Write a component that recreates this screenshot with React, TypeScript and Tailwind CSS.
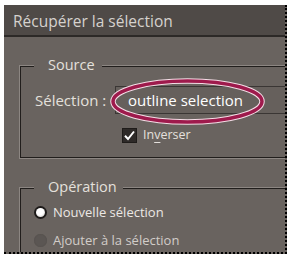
import React from "react";

const font = { fontFamily: '"Open Sans", "Noto Sans", sans-serif' };

function Radio({ on }: { on: boolean }) {
  return on ? (
    <span className="w-[13px] h-[13px] rounded-full bg-[#1d1a19] flex items-center justify-center shrink-0">
      <span className="w-[9px] h-[9px] rounded-full bg-[radial-gradient(circle_at_45%_40%,#ffffff_45%,#bdb8b4_100%)]" />
    </span>
  ) : (
    <span className="w-[13px] h-[13px] rounded-full bg-[#5b5653] shadow-[inset_0_0_1px_#4a4542] shrink-0" />
  );
}

export default function App() {
  return (
    <div className="w-[292px] h-[257px] bg-white pt-[5px] pl-[4px]" style={font}>
      <div className="relative w-[283px] h-[249px] overflow-hidden bg-[#69635f] border-r-2 border-b-2 border-dotted border-black">
        <div className="h-[32px] bg-[#4f4a47] border-b-2 border-[#2c2927] flex items-center pl-[9px] pt-[3px]">
          <span className="text-[15.5px] text-[#d6d2ce]">Récupérer la sélection</span>
        </div>

        {/* Source group */}
        <div className="relative ml-[15px] mt-[28px] w-[300px] h-[94px] border-t border-l border-b border-[#8c8682] shadow-[inset_1px_1px_0_#211e1c,inset_0_-1px_0_#211e1c]">
          <span className="absolute left-[14px] -top-[11px] bg-[#69635f] pl-[14px] pr-[7px] text-[14.5px] text-[#e4e0dc] leading-[20px]">
            Source
          </span>
          <div className="pt-[20px] flex items-center">
            <span className="pl-[15px] w-[95px] text-[15px] text-[#e4e0dc]">Sélection :</span>
            <div className="flex-1 h-[28px] border border-[#3a3634] bg-[#66605c] flex items-center pl-[12px]">
              <span className="text-[15px] text-white">outline selection</span>
            </div>
          </div>
          <div className="mt-[13px] ml-[102px] flex items-center gap-[6px]">
            <span className="w-[15px] h-[15px] bg-[#2e2a28] border border-[#1f1c1a] flex items-center justify-center">
              <svg width="13" height="13" viewBox="0 0 13 13">
                <path d="M2 6.8 L5 10 L11 2.5" fill="none" stroke="white" strokeWidth="2" />
              </svg>
            </span>
            <span className="text-[12.5px] text-[#e4e0dc] leading-[16px]">
              In<span className="underline underline-offset-[3px]">v</span>erser
            </span>
          </div>
        </div>

        {/* Opération group */}
        <div className="relative ml-[15px] mt-[28px] w-[300px] h-[120px] border-t border-l border-[#8c8682] shadow-[inset_1px_1px_0_#211e1c]">
          <span className="absolute left-[14px] -top-[11px] bg-[#69635f] pl-[14px] pr-[6px] text-[14.5px] text-[#e4e0dc] leading-[20px]">
            Opération
          </span>
          <div className="pt-[18px] pl-[14px] flex flex-col gap-[15px]">
            <div className="flex items-center gap-[6px] h-[13px]">
              <Radio on />
              <span className="text-[13px] text-[#ece8e4]">Nouvelle sélection</span>
            </div>
            <div className="flex items-center gap-[6px] h-[13px]">
              <Radio on={false} />
              <span className="text-[13px] text-[#d2cdc9]">Ajouter à la sélection</span>
            </div>
          </div>
        </div>

        {/* highlight ellipse */}
        <svg className="absolute left-0 top-0 pointer-events-none" width="283" height="249">
          <ellipse cx="183.5" cy="96.5" rx="74.5" ry="20.5" fill="none" stroke="#f4dde6" strokeWidth="5.5" />
          <ellipse cx="183.5" cy="96.5" rx="74.5" ry="20.5" fill="none" stroke="#9e1a4c" strokeWidth="3.5" />
        </svg>
      </div>
    </div>
  );
}
